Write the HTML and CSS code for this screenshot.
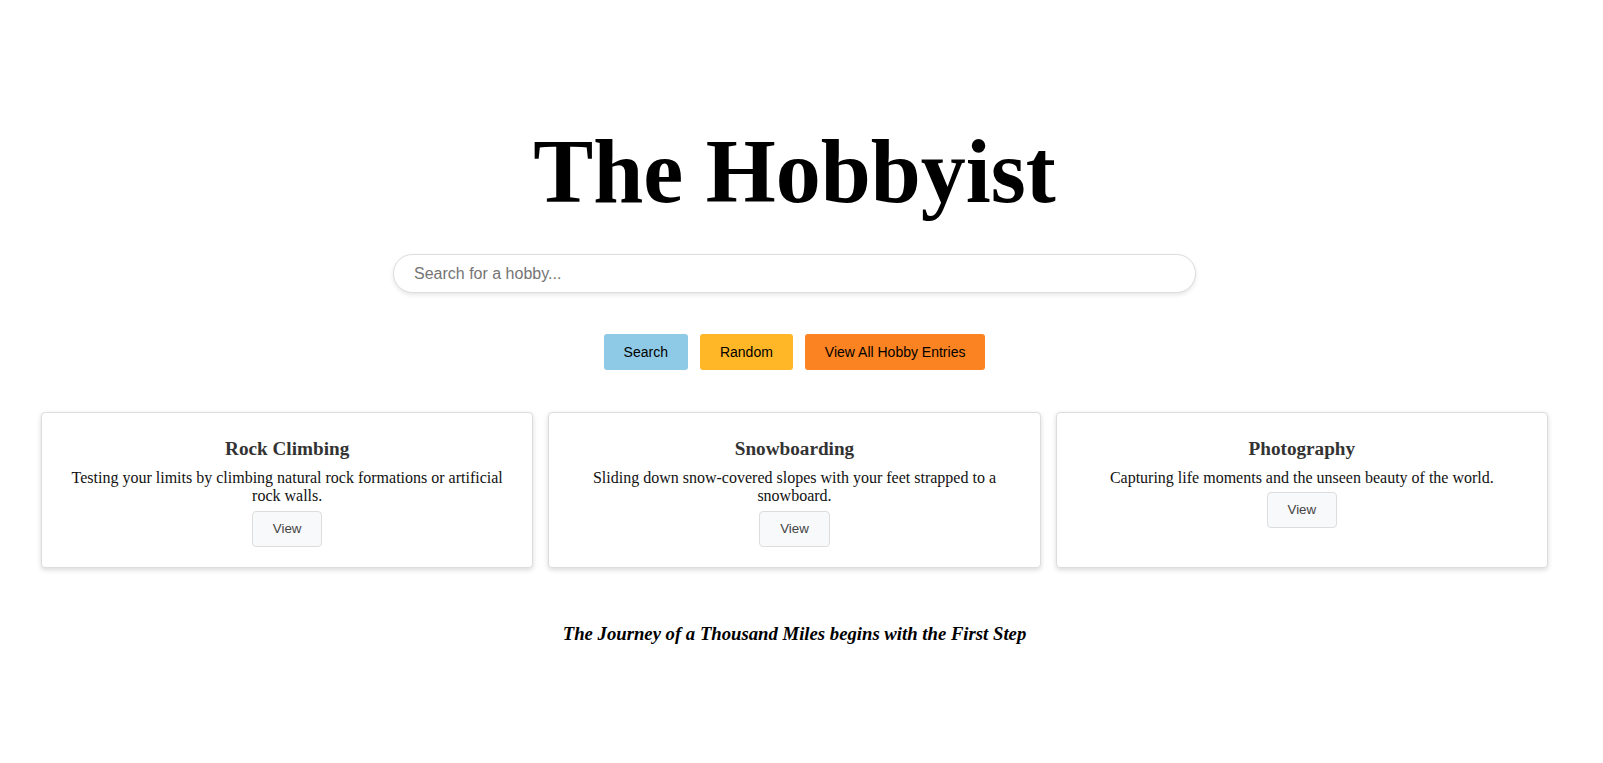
FILE: index.html
```html
<!DOCTYPE html>
<html lang="en">
<head>
<meta charset="utf-8">
<title>The Hobbyist</title>
<link rel="stylesheet" href="styles.css">
</head>
<body>
<div class="page">
  <header class="hero">
    <h1 class="title">The Hobbyist</h1>
    <div class="search-wrap">
      <input class="search" type="text" placeholder="Search for a hobby...">
    </div>
    <div class="actions">
      <button class="btn btn-search">Search</button>
      <button class="btn btn-random">Random</button>
      <button class="btn btn-all">View All Hobby Entries</button>
    </div>
  </header>
  <section class="cards">
    <article class="card">
      <h3 class="card-title">Rock Climbing</h3>
      <p class="card-desc">Testing your limits by climbing natural rock formations or artificial rock walls.</p>
      <button class="view-btn">View</button>
    </article>
    <article class="card">
      <h3 class="card-title">Snowboarding</h3>
      <p class="card-desc">Sliding down snow-covered slopes with your feet strapped to a snowboard.</p>
      <button class="view-btn">View</button>
    </article>
    <article class="card">
      <h3 class="card-title">Photography</h3>
      <p class="card-desc">Capturing life moments and the unseen beauty of the world.</p>
      <button class="view-btn">View</button>
    </article>
  </section>
  <footer class="quote">The Journey of a Thousand Miles begins with the First Step</footer>
</div>
</body>
</html>
```
FILE: styles.css
```css
html, body {
  margin: 0;
  padding: 0;
  background: #ffffff;
}

body {
  font-family: "Liberation Serif", "Times New Roman", serif;
  color: #000;
}

.page {
  width: calc(100% - 14px);
  padding-top: 120px;
}

.title {
  margin: 0 0 31px;
  font-family: "Liberation Serif", "Times New Roman", serif;
  font-weight: bold;
  font-size: 90px;
  line-height: normal;
  text-align: center;
}

.search-wrap {
  display: flex;
  justify-content: center;
}

.search {
  box-sizing: border-box;
  width: 803px;
  height: 39px;
  padding: 0 20px;
  border: 1px solid #dddddd;
  border-radius: 20px;
  font-family: "Liberation Sans", Arial, sans-serif;
  font-size: 16px;
  color: #333;
  box-shadow: 0 2px 4px rgba(0, 0, 0, 0.1);
  outline: none;
}

.search::placeholder {
  color: #757575;
}

.actions {
  display: flex;
  justify-content: center;
  gap: 12px;
  margin-top: 41px;
}

.btn {
  padding: 10px 20px;
  border: none;
  border-radius: 3px;
  font-family: "Liberation Sans", Arial, sans-serif;
  font-size: 14px;
  line-height: 16px;
  color: #000;
  cursor: pointer;
}

.btn-search { background: #8ecae6; }
.btn-random { background: #ffb627; }
.btn-all { background: #fb8321; }

.cards {
  display: grid;
  grid-template-columns: repeat(3, 1fr);
  gap: 15px;
  padding: 0 41px;
  margin-top: 42px;
}

.card {
  display: flex;
  flex-direction: column;
  align-items: center;
  padding: 20px;
  border: 1px solid #dddddd;
  border-radius: 4px;
  box-shadow: 0 2px 5px rgba(0, 0, 0, 0.15);
  text-align: center;
  background: #fff;
}

.card-title {
  margin: 5px 0 9px;
  font-size: 19.2px;
  font-weight: bold;
  line-height: 22px;
  color: #333;
}

.card-desc {
  margin: 0;
  font-size: 16px;
  line-height: 18.4px;
  color: #111;
}

.view-btn {
  margin-top: 5px;
  padding: 10px 20px;
  border: 1px solid #dddddd;
  border-radius: 4px;
  background: #f8f9fa;
  font-family: "Liberation Sans", Arial, sans-serif;
  font-size: 13.333px;
  line-height: 14px;
  color: #444;
  cursor: pointer;
}

.quote {
  margin-top: 55px;
  text-align: center;
  font-size: 18.72px;
  font-weight: bold;
  font-style: italic;
  line-height: 22px;
}
```
